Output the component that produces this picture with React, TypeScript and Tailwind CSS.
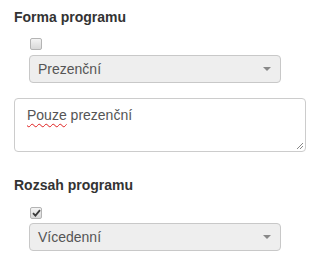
import React from "react";

function Checkbox({ checked }: { checked?: boolean }) {
  return (
    <div className="w-[12px] h-[12px] rounded-[2px] border border-[#b4b4b4] bg-gradient-to-b from-[#f4f4f4] to-[#d8d8d8] flex items-center justify-center">
      {checked && (
        <svg width="9" height="8" viewBox="0 0 9 8">
          <path d="M1 4.2 L3.4 6.6 L8 1.2" fill="none" stroke="#3a3a3a" strokeWidth="1.8" />
        </svg>
      )}
    </div>
  );
}

function Select({ value }: { value: string }) {
  return (
    <div className="w-[252px] h-[28px] rounded-[4px] border border-[#c8c8c8] bg-[#eeeeee] flex items-center pl-[8px] pr-[9px] text-[14px] text-[#555555]">
      <span className="flex-1">{value}</span>
      <div className="w-0 h-0 border-l-[4px] border-r-[4px] border-t-[4px] border-l-transparent border-r-transparent border-t-[#888888]" />
    </div>
  );
}

export default function App() {
  return (
    <div
      className="w-[329px] h-[265px] bg-white pl-[14px] pt-[7px] text-[#333333]"
      style={{ fontFamily: '"Liberation Sans", Arial, sans-serif' }}
    >
      <div className="text-[14px] leading-[20px] font-bold">Forma programu</div>
      <div className="ml-[16px] mt-[11px]">
        <Checkbox />
      </div>
      <div className="ml-[15px] mt-[5px]">
        <Select value="Prezenční" />
      </div>
      <div className="relative mt-[15px] w-[292px] h-[54px] rounded-[4px] border border-[#cccccc] bg-white px-[12px] pt-[6px] text-[14px] leading-[20px] text-[#555555]">
        <span className="underline decoration-wavy decoration-[#e02020] decoration-1 underline-offset-[3px]">Pouze</span>{" "}
        prezenční
        <svg className="absolute right-[1px] bottom-[1px]" width="9" height="9" viewBox="0 0 9 9">
          <path d="M8 2 L2 8 M8 5 L5 8" stroke="#888888" strokeWidth="1" />
        </svg>
      </div>
      <div className="mt-[23px] text-[14px] leading-[20px] font-bold">Rozsah programu</div>
      <div className="ml-[16px] mt-[12px]">
        <Checkbox checked />
      </div>
      <div className="ml-[15px] mt-[4px]">
        <Select value="Vícedenní" />
      </div>
    </div>
  );
}
